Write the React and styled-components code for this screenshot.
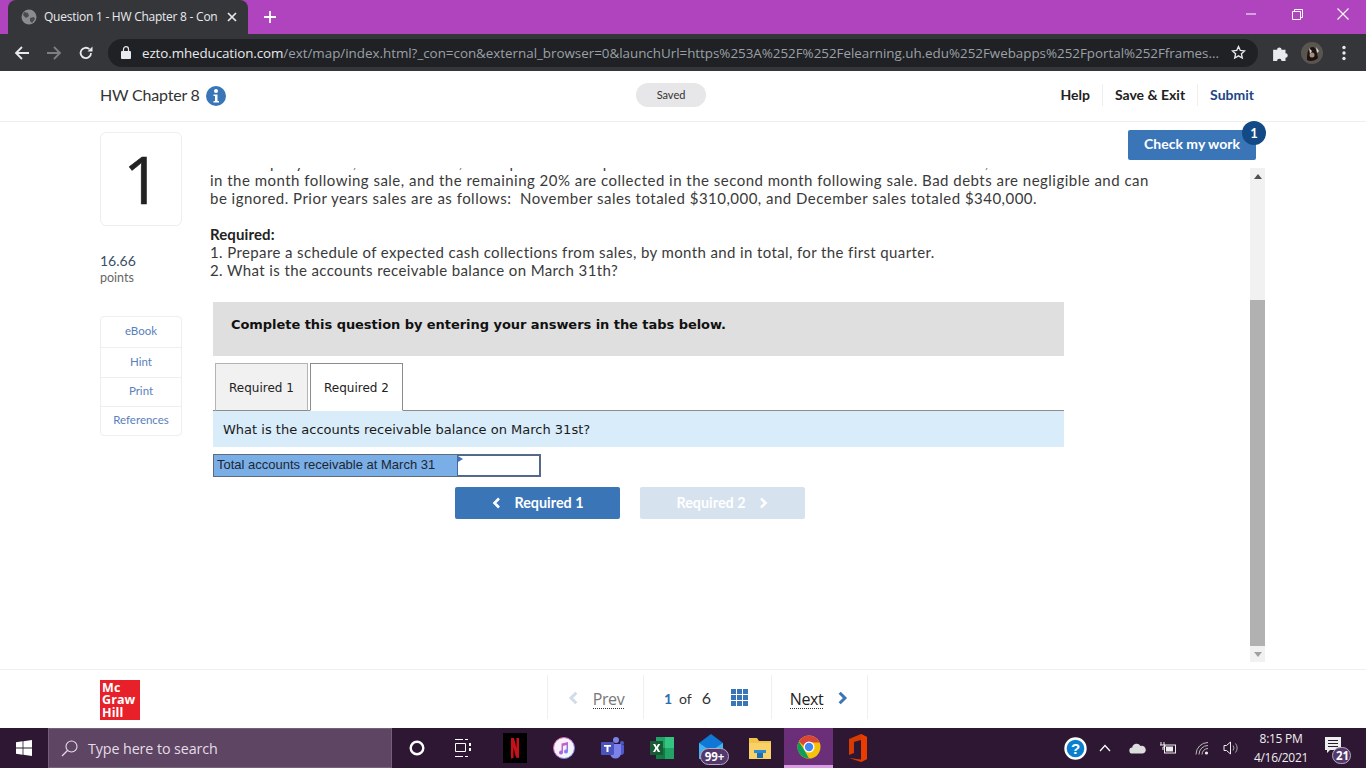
import React from "react";
import styled, { createGlobalStyle } from "styled-components";

const Global = createGlobalStyle`
  html, body { margin: 0; padding: 0; width: 1366px; height: 768px; overflow: hidden; background: #fff; }
  * { box-sizing: border-box; }
  body { font-family: "Lato", "Liberation Sans", sans-serif; }
`;
const Page = styled.div`width:1366px;height:768px;display:flex;flex-direction:column;overflow:hidden;`;
const TabStrip = styled.div`height:34px;background:#b044bf;display:flex;align-items:flex-start;flex:none;`;
const BrowserTab = styled.div`
  margin:0 0 0 8px;width:240px;height:34px;background:#35363a;border-radius:8px 8px 0 0;display:flex;align-items:center;
  padding:0 0 0 13px;color:#e8eaed;font:12px/14px "Open Sans",sans-serif;gap:7px;letter-spacing:-.25px;
`;
const TabTitle = styled.span`width:176px;white-space:nowrap;overflow:hidden;`;
const NewTab = styled.div`width:20px;height:34px;margin-left:12px;display:flex;align-items:center;justify-content:center;`;
const WinControls = styled.div`margin-left:auto;display:flex;height:28px;align-items:center;`;
const WinBtn = styled.div`width:46px;display:flex;justify-content:center;`;
const Toolbar = styled.div`height:37px;background:#35363a;display:flex;align-items:center;padding-left:14px;flex:none;`;
const ToolbarBtn = styled.div`width:${p=>p.$w||32}px;margin-left:${p=>p.$ml||0}px;height:24px;display:flex;align-items:center;justify-content:flex-start;flex:none;`;
const Omnibox = styled.div`
  width:1150px;height:28px;background:#202124;border-radius:14px;display:flex;align-items:center;padding:0 12px 0 13px;flex:none;
  font:13.4px/16px "Open Sans",sans-serif;color:#9aa0a6;white-space:nowrap;letter-spacing:-.1px;
`;
const LockWrap = styled.span`display:flex;margin-right:11px;flex:none;`;
const Host = styled.span`color:#e8eaed;`;
const Url = styled.span`flex:1;overflow:hidden;letter-spacing:-.02px;`;
const StarWrap = styled.span`display:flex;margin-left:6px;flex:none;`;
const Head = styled.header`height:51px;border-bottom:1px solid #eee;display:flex;align-items:center;padding:0 100px 3px 100px;background:#fff;flex:none;`;
const HeadTitle = styled.div`font-size:16px;color:#333;letter-spacing:-.2px;width:536px;display:flex;align-items:center;gap:6px;`;
const InfoWrap = styled.span`display:flex;margin-top:2px;`;
const Saved = styled.div`width:70px;height:24px;border-radius:12px;background:#e7e6e8;font-size:11px;color:#333;display:flex;align-items:center;justify-content:center;`;
const HeadNav = styled.nav`margin-left:auto;display:flex;align-items:center;font-size:14px;font-weight:700;`;
const HeadLink = styled.a`color:${p=>p.$blue?"#1c4587":"#222"};padding:0 12px;height:22px;line-height:22px;border-left:${p=>p.$first?"none":"1px solid #eee"};`;
const Main = styled.main`height:547px;display:flex;position:relative;padding-left:100px;flex:none;`;
const LeftCol = styled.aside`width:82px;padding-top:10px;flex:none;`;
const NumBox = styled.div`height:94px;border:1px solid #eee;border-radius:6px;font:66px/90px "Open Sans",sans-serif;color:#222;display:flex;justify-content:center;padding-left:2px;-webkit-text-stroke:.6px #222;`;
const Points = styled.div`margin-top:26px;height:37px;`;
const PointsNum = styled.div`font-size:14px;line-height:18px;color:#3a5068;`;
const PointsLbl = styled.div`font-size:12.5px;line-height:16px;color:#666;`;
const LinkBox = styled.div`margin-top:27px;border:1px solid #eee;border-radius:4px;`;
const SideLink = styled.a`display:flex;height:${p=>p.$h||30}px;padding-bottom:3px;align-items:center;justify-content:center;font-size:11.5px;color:#5a80bd;border-top:${p=>p.$first?"none":"1px solid #eee"};`;
const Scroller = styled.div`width:1040px;margin:46px 0 0 28px;height:494px;overflow:hidden;flex:none;`;
const Body = styled.div`margin-top:-15px;`;
const Para = styled.p`margin:0 0 18px;width:1000px;font-size:15px;line-height:18px;color:#3a3a3a;letter-spacing:${p=>p.$tight?".38px":".48px"};`;
const Strong = styled.b`display:block;letter-spacing:.1px;color:#222;`;
const Banner = styled.div`margin:23px 0 0 3px;width:851px;height:54px;background:#dfdfdf;padding:14px 18px;font:700 13px/18px "DejaVu Sans",sans-serif;color:#111;letter-spacing:-.05px;`;
const Tabs = styled.div`margin:7px 0 0 3px;width:851px;height:48px;border-bottom:1px solid #8c8c8c;display:flex;gap:2px;padding-left:2px;`;
const Tab = styled.div`width:93px;height:48px;border:1px solid ${p=>p.$on?"#8c8c8c":"#b4b4b4"};border-bottom:${p=>p.$on?"1px solid #fff":"1px solid #8c8c8c"};background:${p=>p.$on?"#fff":"#f1f1f1"};font:12px/48px "DejaVu Sans",sans-serif;color:#222;text-align:center;`;
const Ask = styled.div`margin-left:3px;width:851px;height:36px;background:#d9ecfa;padding:0 10px;font:13px/38px "DejaVu Sans",sans-serif;color:#1a1a1a;`;
const AnswerRow = styled.div`margin:7px 0 0 3px;width:328px;height:23px;display:flex;border:1px solid #5f6b7a;`;
const AnswerLabel = styled.div`width:244px;background:#7aaee6;font:13px/19px "Liberation Sans",sans-serif;color:#1c2733;padding-left:3px;border-right:1px solid #44699a;`;
const AnswerInput = styled.div`flex:1;background:#fff;border:1px solid #44699a;border-left:none;position:relative;`;
const Flag = styled.span`position:absolute;left:0;top:0;width:0;height:0;border-top:3px solid transparent;border-bottom:3px solid transparent;border-left:5px solid #3b75b8;`;
const NavRow = styled.div`margin:10px 0 0 245px;display:flex;gap:20px;`;
const PageBtn = styled.div`width:165px;height:32px;padding-bottom:1px;border-radius:2px;background:${p=>p.$off?"#d7e2ef":"#3a75b8"};color:#fff;font-size:14.4px;font-weight:700;display:flex;align-items:center;justify-content:center;gap:11px;`;
const ScrollTrack = styled.div`width:15px;height:494px;margin-top:46px;background:#f1f1f1;flex:none;display:flex;flex-direction:column;align-items:center;`;
const Arrow = styled.div`height:16px;width:100%;display:flex;align-items:center;justify-content:center;flex:none;`;
const Thumb = styled.div`width:15px;height:347px;margin-top:116px;background:#b1b1b1;margin-bottom:auto;`;
const Check = styled.div`position:absolute;left:1128px;top:8px;width:128px;height:30px;padding-bottom:3px;background:#3a75b8;border-radius:2px;color:#fff;font-size:14px;font-weight:700;display:flex;align-items:center;justify-content:center;`;
const Badge = styled.div`position:absolute;left:1242px;top:-1px;width:24px;height:24px;border-radius:50%;background:#134a86;color:#fff;font-size:13px;font-weight:700;display:flex;align-items:center;justify-content:center;`;
const Foot = styled.footer`height:59px;border-top:1px solid #f0f0f0;padding:0 0 0 100px;display:flex;flex:none;`;
const Logo = styled.div`width:40px;height:40px;margin-top:10px;background:#e8202a;color:#fff;font:700 12.5px/12.3px "Open Sans",sans-serif;padding:2px 0 0 2px;letter-spacing:.1px;`;
const Pager = styled.div`margin:5px 0 0 407px;display:flex;height:44px;`;
const PagerCell = styled.div`width:${p=>p.$w}px;border-left:1px solid #f0f0f0;border-right:${p=>p.$last?"1px solid #f0f0f0":"none"};display:flex;align-items:center;justify-content:center;gap:${p=>p.$gap||12}px;font-size:16px;color:#333;`;
const Dotted = styled.span`color:${p=>p.$dim?"#777":"#222"};border-bottom:1px dotted #333;line-height:15px;height:17px;margin-top:7px;font-family:"Open Sans",sans-serif;letter-spacing:-.4px;`;
const ChevNudge = styled.span`display:flex;margin-top:2px;`;
const PageNo = styled.span`font-size:14px;color:#333;display:flex;align-items:baseline;gap:7px;margin:1px 0 0 -3px;`;
const Cur = styled.b`color:#2f6cb3;`;
const Total = styled.span`font-size:16px;margin-left:3px;`;
const Grid = styled.span`display:grid;grid-template-columns:repeat(3,5px);grid-auto-rows:5px;gap:1px;margin:1px 0 0 8px;`;
const GridDot = styled.i`background:#3a75b8;display:block;`;
const Taskbar = styled.div`height:40px;background:#2e1733;display:flex;align-items:center;flex:none;color:#fff;`;
const Start = styled.div`width:48px;height:40px;display:flex;align-items:center;justify-content:center;`;
const Search = styled.div`width:344px;height:40px;background:#5e4563;border:1px solid #75607a;display:flex;align-items:center;padding-left:12px;gap:10px;font:14.3px "Open Sans",sans-serif;color:#e4dde6;letter-spacing:-.1px;`;
const Slot = styled.div`width:49px;height:40px;display:flex;align-items:center;justify-content:center;position:relative;flex:none;background:${p=>p.$on?"#6a2f78":"none"};border-bottom:${p=>p.$on?"3px solid #d79be0":"none"};`;
const Tray = styled.div`margin-left:auto;display:flex;align-items:center;height:40px;`;
const TrayIco = styled.div`width:${p=>p.$w||31}px;height:40px;display:flex;align-items:center;justify-content:center;`;
const Clock = styled.div`width:70px;margin-left:6px;text-align:center;font:12px/19px "Open Sans",sans-serif;color:#eee;letter-spacing:-.3px;`;
const Pill = styled.span`position:absolute;background:#53396b;border:1px solid #b9a8c4;border-radius:9px;color:#fff;font:700 11.5px/15px "Open Sans",sans-serif;padding:0 3px;text-align:center;`;
const Notif = styled.div`width:36px;height:40px;position:relative;display:flex;align-items:center;justify-content:center;margin-right:14px;`;

const Ic = p => <svg {...p} />;
const Globe = () => <Ic width="16" height="16" viewBox="0 0 16 16"><circle cx="8" cy="8" r="7.5" fill="#8a8c90"/><path d="M3 3l4 1 1 3-3 2-3-3zM9 9l4-1 1 2-3 4-2-2z" fill="#4a4b4f"/></Ic>;
const Chev = ({ dir = "r", c = "#fff", s = 12, w = 2.6 }) => <Ic width={s} height={s} viewBox="0 0 12 12"><path d={dir==="r"?"M4 1.5L8.5 6 4 10.5":"M8 1.5L3.5 6 8 10.5"} fill="none" stroke={c} strokeWidth={w}/></Ic>;

export default function App() {
  return (
    <Page>
      <Global />
      <TabStrip>
        <BrowserTab>
          <Globe />
          <TabTitle>Question 1 - HW Chapter 8 - Con</TabTitle>
          <Ic width="10" height="10" viewBox="0 0 10 10"><path d="M1 1l8 8M9 1l-8 8" stroke="#e8eaed" strokeWidth="1.7"/></Ic>
        </BrowserTab>
        <NewTab><Ic width="12" height="12" viewBox="0 0 12 12"><path d="M6 0v12M0 6h12" stroke="#fff" strokeWidth="1.8"/></Ic></NewTab>
        <WinControls>
          <WinBtn><Ic width="10" height="10" viewBox="0 0 10 10"><path d="M0 5h10" stroke="#fff"/></Ic></WinBtn>
          <WinBtn><Ic width="11" height="11" viewBox="0 0 11 11"><path d="M.5 2.500h8v8h-8zM2.500 2.500v-2h8v8h-2" fill="none" stroke="#fff"/></Ic></WinBtn>
          <WinBtn><Ic width="12" height="12" viewBox="0 0 12 12"><path d="M.5.5l11 11M11.500.5l-11 11" stroke="#fff" strokeWidth="1.1"/></Ic></WinBtn>
        </WinControls>
      </TabStrip>
      <Toolbar>
        <ToolbarBtn><Ic width="16" height="16" viewBox="0 0 16 16"><path d="M15 8H2M8 2L2 8l6 6" fill="none" stroke="#e8eaed" strokeWidth="1.8"/></Ic></ToolbarBtn>
        <ToolbarBtn><Ic width="16" height="16" viewBox="0 0 16 16"><path d="M1 8h13M8 2l6 6-6 6" fill="none" stroke="#7d7f83" strokeWidth="1.8"/></Ic></ToolbarBtn>
        <ToolbarBtn $w={30}><Ic width="16" height="16" viewBox="0 0 16 16"><path d="M13 8a5.200 5.200 0 1 1-1.600-3.800" fill="none" stroke="#e8eaed" strokeWidth="1.8"/><path d="M14.500 1.500v5h-5z" fill="#e8eaed"/></Ic></ToolbarBtn>
        <Omnibox>
          <LockWrap><Ic width="10" height="13" viewBox="0 0 10 13"><path d="M1 5h8a1 1 0 0 1 1 1v6a1 1 0 0 1-1 1H1a1 1 0 0 1-1-1V6a1 1 0 0 1 1-1z" fill="#e8eaed"/><path d="M2.500 5V3.200a2.500 2.500 0 0 1 5 0V5" fill="none" stroke="#e8eaed" strokeWidth="1.200"/></Ic></LockWrap>
          <Host>ezto.mheducation.com</Host>
          <Url>/ext/map/index.html?_con=con&amp;external_browser=0&amp;launchUrl=https%253A%252F%252Felearning.uh.edu%252Fwebapps%252Fportal%252Fframes...</Url>
          <StarWrap><Ic width="15" height="15" viewBox="0 0 24 24"><path d="M12 2.500l2.900 6.200 6.800.8-5 4.600 1.300 6.700-6-3.400-6 3.400 1.300-6.700-5-4.600 6.800-.8z" fill="none" stroke="#e8eaed" strokeWidth="2.200"/></Ic></StarWrap>
        </Omnibox>
        <ToolbarBtn $w={29} $ml={14}><Ic width="18" height="18" viewBox="0 0 16 16"><path d="M1 5h3.500a2 2 0 1 1 4 0H12v3.200a2 2 0 1 1 0 4V15H8.500a2 2 0 1 0-4 0H1z" fill="#e8eaed"/></Ic></ToolbarBtn>
        <ToolbarBtn $w={41}><Ic width="22" height="22" viewBox="0 0 22 22"><circle cx="11" cy="11" r="11" fill="#5b5550"/><path d="M6 18c0-7 1-12 5-13 5 0 5 6 6 11-3 3-8 4-11 2z" fill="#1a1413"/><path d="M8 6l3 3-2 3zM15 5l3 4-2 2z" fill="#d9d4cc"/><circle cx="11" cy="13" r="2.500" fill="#b08a78"/></Ic></ToolbarBtn>
        <ToolbarBtn $w={10}><Ic width="4" height="16" viewBox="0 0 4 16"><circle cx="2" cy="2.500" r="1.700" fill="#e8eaed"/><circle cx="2" cy="8" r="1.700" fill="#e8eaed"/><circle cx="2" cy="13.500" r="1.700" fill="#e8eaed"/></Ic></ToolbarBtn>
      </Toolbar>
      <Head>
        <HeadTitle>HW Chapter 8
          <InfoWrap><Ic width="20" height="20" viewBox="0 0 20 20"><circle cx="10" cy="10" r="10" fill="#3a75b8"/><circle cx="10" cy="5" r="2" fill="#fff"/><path d="M7.500 8.500h4v6.500H13v1.500H7.500V15H9v-5H7.500z" fill="#fff"/></Ic></InfoWrap>
        </HeadTitle>
        <Saved>Saved</Saved>
        <HeadNav>
          <HeadLink $first>Help</HeadLink>
          <HeadLink>Save &amp; Exit</HeadLink>
          <HeadLink $blue>Submit</HeadLink>
        </HeadNav>
      </Head>
      <Main>
        <LeftCol>
          <NumBox>1</NumBox>
          <Points><PointsNum>16.66</PointsNum><PointsLbl>points</PointsLbl></Points>
          <LinkBox>
            <SideLink $first>eBook</SideLink>
            <SideLink>Hint</SideLink>
            <SideLink $h={29}>Print</SideLink>
            <SideLink $h={29}>References</SideLink>
          </LinkBox>
        </LeftCol>
        <Scroller>
          <Body>
            <Para>
              The company's sales, all on account, are expected to be paid as follows: 30% are collected in the month of sale, 50% are collected
              <br/>in the month following sale, and the remaining 20% are collected in the second month following sale. Bad debts are negligible and can
              <br/>be ignored. Prior years sales are as follows:&nbsp; November sales totaled $310,000, and December sales totaled $340,000.
            </Para>
            <Para $tight>
              <Strong>Required:</Strong>
              1. Prepare a schedule of expected cash collections from sales, by month and in total, for the first quarter.
              <br/>2. What is the accounts receivable balance on March 31th?
            </Para>
            <Banner>Complete this question by entering your answers in the tabs below.</Banner>
            <Tabs><Tab>Required 1</Tab><Tab $on>Required 2</Tab></Tabs>
            <Ask>What is the accounts receivable balance on March 31st?</Ask>
            <AnswerRow>
              <AnswerLabel>Total accounts receivable at March 31</AnswerLabel>
              <AnswerInput><Flag /></AnswerInput>
            </AnswerRow>
            <NavRow>
              <PageBtn><Chev dir="l" />Required 1</PageBtn>
              <PageBtn $off>Required 2<Chev /></PageBtn>
            </NavRow>
          </Body>
        </Scroller>
        <ScrollTrack>
          <Arrow><Ic width="8" height="5" viewBox="0 0 8 5"><path d="M4 0l4 5H0z" fill="#505050"/></Ic></Arrow>
          <Thumb />
          <Arrow><Ic width="8" height="5" viewBox="0 0 8 5"><path d="M0 0h8L4 5z" fill="#a0a0a0"/></Ic></Arrow>
        </ScrollTrack>
        <Check>Check my work</Check>
        <Badge>1</Badge>
      </Main>
      <Foot>
        <Logo>Mc<br/>Graw<br/>Hill</Logo>
        <Pager>
          <PagerCell $w={96}><ChevNudge><Chev dir="l" c="#d0dcea" s={14} w={2.6}/></ChevNudge><Dotted $dim>Prev</Dotted></PagerCell>
          <PagerCell $w={128}><PageNo><Cur>1</Cur> of <Total>6</Total></PageNo><Grid>{Array.from({length:9}).map((_,i)=><GridDot key={i}/>)}</Grid></PagerCell>
          <PagerCell $w={97} $last><Dotted>Next</Dotted><ChevNudge><Chev c="#3a75b8" s={14} w={2.6}/></ChevNudge></PagerCell>
        </Pager>
      </Foot>
      <Taskbar>
        <Start><Ic width="16" height="16" viewBox="0 0 16 16"><path d="M0 2.200l6.600-.9v6.300H0zM7.400 1.200L16 0v7.600H7.400zM0 8.400h6.600v6.300L0 13.800zM7.400 8.400H16V16l-8.600-1.200z" fill="#fff"/></Ic></Start>
        <Search>
          <Ic width="17" height="17" viewBox="0 0 17 17"><circle cx="10.500" cy="6.500" r="5.500" fill="none" stroke="#e4dde6" strokeWidth="1.100"/><path d="M6.500 10.500L1 16" stroke="#e4dde6" strokeWidth="1.200"/></Ic>
          Type here to search
        </Search>
        <Slot><Ic width="16" height="16" viewBox="0 0 16 16"><circle cx="8" cy="8" r="6.300" fill="none" stroke="#fff" strokeWidth="2.400"/></Ic></Slot>
        <Slot><Ic width="16" height="18" viewBox="0 0 16 18" style={{marginRight:6}}><path d="M0 .5h8M0 17.500h8M10 .5h3M10 17.500h3M.5 4.500h10v8H.5z" fill="none" stroke="#fff"/><path d="M14 4h2v3h-2zM14 9h2v3h-2z" fill="#fff"/></Ic></Slot>
        <Slot><Ic width="24" height="30" viewBox="0 0 24 30"><rect width="24" height="30" fill="#000"/><path d="M8 5h3l2.500 10V5H16v20l-3-.5-2.500-10V25L8 25.500z" fill="#c8101a"/></Ic></Slot>
        <Slot><Ic width="22" height="22" viewBox="0 0 22 22"><defs><linearGradient id="it" x1="0" y1="0" x2="1" y2="1"><stop offset="0" stopColor="#f75f9a"/><stop offset=".5" stopColor="#b75fe0"/><stop offset="1" stopColor="#4f9ef5"/></linearGradient></defs><circle cx="11" cy="11" r="10.500" fill="#f6f3f8" stroke="url(#it)"/><path d="M8.500 6.500l6.500-1.500v9.500a2 2 0 1 1-1.500-1.900V8L10 9v6.500a2 2 0 1 1-1.500-1.900z" fill="url(#it)"/></Ic></Slot>
        <Slot><Ic width="24" height="24" viewBox="0 0 24 24"><circle cx="15" cy="4" r="3" fill="#7b83eb"/><circle cx="21" cy="7" r="2" fill="#5059c9"/><path d="M17 9h6v7a3 3 0 0 1-6 0z" fill="#5059c9"/><path d="M9 8h11v9a5 5 0 0 1-11 0z" fill="#7b83eb"/><rect y="6" width="13" height="13" rx="1" fill="#4b53bc"/><path d="M3 9h7v1.800H7.500V16h-2v-5.200H3z" fill="#fff"/></Ic></Slot>
        <Slot><Ic width="24" height="24" viewBox="0 0 24 24"><rect x="6" y="1" width="18" height="22" fill="#21a366"/><rect x="15" y="1" width="9" height="11" fill="#33c481"/><rect x="6" y="12" width="9" height="11" fill="#107c41"/><rect y="5" width="13" height="14" fill="#185c37"/><path d="M3 8h2.300l1.300 2.700L8 8h2.200l-2.300 4 2.300 4H7.900l-1.400-2.700L5.100 16H3l2.300-4z" fill="#fff"/></Ic></Slot>
        <Slot><Ic width="24" height="28" viewBox="0 0 24 28"><path d="M0 9L12 0l12 9v16H0z" fill="#0f78d4"/><path d="M0 9l12 8 12-8v16H0z" fill="#40b3f0"/></Ic><Pill style={{left:14,top:20,width:29}}>99+</Pill></Slot>
        <Slot><Ic width="22" height="22" viewBox="0 0 22 22"><path d="M0 1h8l2 3h12v18H0z" fill="#f0c44a"/><rect y="6" width="22" height="16" fill="#fad166"/><path d="M5 13h12v3H5z" fill="#2a8ad4"/><path d="M8 16h6v5H8z" fill="#1f6fb0"/></Ic></Slot>
        <Slot $on><Ic width="24" height="24" viewBox="0 0 24 24"><circle cx="12" cy="12" r="11.500" fill="#f4c20d"/><path d="M2 6.500A11.500 11.500 0 0 1 22.500 7.500H12a4.500 4.500 0 0 0-4.400 4z" fill="#db4437"/><path d="M1.800 6.500L7.600 15.500l4.400 8A11.500 11.500 0 0 1 1.800 6.500z" fill="#0f9d58"/><circle cx="12" cy="12" r="5.500" fill="#fff"/><circle cx="12" cy="12" r="4.200" fill="#4285f4"/></Ic></Slot>
        <Slot><Ic width="18" height="28" viewBox="0 0 18 28"><path d="M0 5l12-5 6 3v22l-6 3-12-4 12 1.500V6L5 8v11l-5 2z" fill="#d83b01"/><path d="M12 0l6 3v22l-6 3z" fill="#eb3c00"/></Ic></Slot>
        <Tray>
          <TrayIco $w={30}><Ic width="23" height="23" viewBox="0 0 23 23"><circle cx="11.500" cy="11.500" r="10" fill="#0a7fd0" stroke="#fff" strokeWidth="2.400"/><text x="11.500" y="17" textAnchor="middle" fontFamily="Liberation Sans" fontWeight="700" fontSize="15" fill="#fff">?</text></Ic></TrayIco>
          <TrayIco $w={30}><Ic width="12" height="8" viewBox="0 0 12 8"><path d="M1 7l5-5.500L11 7" fill="none" stroke="#fff" strokeWidth="1.200"/></Ic></TrayIco>
          <TrayIco $w={34}><Ic width="17" height="12" viewBox="0 0 17 12"><path d="M3.500 11.500a3 3 0 0 1-.3-6A4.500 4.500 0 0 1 11.500 4a3.800 3.800 0 0 1 2.500 7.500z" fill="#ddd"/></Ic></TrayIco>
          <TrayIco $w={28}><Ic width="16" height="12" viewBox="0 0 16 12"><rect x="4.500" y="3" width="11" height="8" fill="none" stroke="#eee"/><rect x="6" y="4.500" width="7" height="5" fill="#eee"/><path d="M1 0v3M4 0v3M0 3h5v2H3v3" stroke="#eee" fill="none"/></Ic></TrayIco>
          <TrayIco $w={40}><Ic width="14" height="14" viewBox="0 0 14 14"><path d="M1 13.500A12 12 0 0 1 13 1.500M4 13.500A9 9 0 0 1 13 4.500M7 13.500A6 6 0 0 1 13 7.500" fill="none" stroke="#bbb"/><circle cx="11.500" cy="12" r="1.600" fill="#eee"/></Ic></TrayIco>
          <TrayIco $w={18}><Ic width="16" height="14" viewBox="0 0 16 14"><path d="M1 4.500h2.500L7.500 1v12l-4-3.500H1z" fill="none" stroke="#eee"/><path d="M10 4.500a4 4 0 0 1 0 5M12.500 2.500a7 7 0 0 1 0 9" fill="none" stroke="#aaa"/></Ic></TrayIco>
          <Clock>8:15 PM<br/>4/16/2021</Clock>
          <Notif>
            <Ic width="16" height="17" viewBox="0 0 16 17" style={{marginTop:-5,marginLeft:-3}}><path d="M0 0h16v13H5l-3 3v-3H0z" fill="#eee"/><path d="M3 3.500h10M3 6.500h10M3 9.500h10" stroke="#2e1733"/></Ic>
            <Pill style={{left:16,top:19,width:19}}>21</Pill>
          </Notif>
        </Tray>
      </Taskbar>
    </Page>
  );
}
